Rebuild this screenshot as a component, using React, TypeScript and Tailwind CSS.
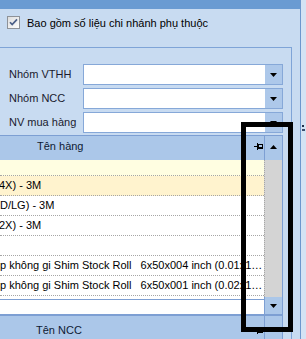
import React from "react";

function DownArrow() {
  return (
    <svg width="7" height="4" viewBox="0 0 7 4" className="block">
      <polygon points="0,0 7,0 3.5,4" fill="#000" />
    </svg>
  );
}

function UpArrow() {
  return (
    <svg width="7" height="4" viewBox="0 0 7 4" className="block">
      <polygon points="0,4 7,4 3.5,0" fill="#000" />
    </svg>
  );
}

function Pin() {
  return (
    <svg width="10" height="7" viewBox="0 0 10 7" className="block" shapeRendering="crispEdges">
      <path d="M0 3.5H3" stroke="#000" strokeWidth="1" />
      <path d="M3.5 0V7" stroke="#000" strokeWidth="1" />
      <rect x="4.5" y="1.5" width="4" height="3" fill="none" stroke="#000" strokeWidth="1" />
      <path d="M4 5.5H9" stroke="#000" strokeWidth="1" />
    </svg>
  );
}

function CheckBox() {
  return (
    <svg width="13" height="13" viewBox="0 0 13 13" className="block shrink-0">
      <defs>
        <linearGradient id="cbg" x1="0" y1="0" x2="1" y2="1">
          <stop offset="0" stopColor="#dcdcdc" />
          <stop offset="1" stopColor="#ffffff" />
        </linearGradient>
      </defs>
      <rect x="0.5" y="0.5" width="12" height="12" fill="url(#cbg)" stroke="#8e9298" />
      <path d="M3 6.2 L5.2 8.6 L10 3.4" fill="none" stroke="#4b5f88" strokeWidth="1.7" />
    </svg>
  );
}

function Combo({ label }: { label: string }) {
  return (
    <div className="flex items-center h-[21px]">
      <div className="w-[83px] pl-[9px] text-[#1a1a2e] leading-[13px]">{label}</div>
      <div className="w-[200px] h-[21px] border border-[#86a8d8] bg-white flex justify-end">
        <div className="w-[17px] h-full bg-[#adc8ea] flex items-center justify-center">
          <DownArrow />
        </div>
      </div>
    </div>
  );
}

function Row({ children, bg = "bg-white", h = "h-[20px]", indent = "pl-0" }: { children?: React.ReactNode; bg?: string; h?: string; indent?: string }) {
  return (
    <div className={`${h} ${bg} border-b border-dotted border-[#a6a6a6] flex items-center overflow-hidden`}>
      <div className={`w-full ${indent} whitespace-pre overflow-hidden text-ellipsis leading-[13px] pr-[1px]`}>{children}</div>
    </div>
  );
}

export default function App() {
  return (
    <div className="w-[306px] h-[339px] overflow-hidden flex bg-[#d4e3f4] font-['Liberation_Sans',Arial,sans-serif] text-[11px] text-black relative">
      <div className="w-[301px] h-full border-r border-[#6d97cd] flex flex-col shrink-0">
        <div className="h-[9px] bg-[#6a9bd2] shrink-0" />
        <div className="flex-1 bg-[#c8dbf1] flex flex-col">
          <div className="h-[38px] pt-[7px] pl-[7px] flex items-start shrink-0">
            <CheckBox />
            <span className="ml-[7px] leading-[13px] mt-[1px]">Bao gồm số liệu chi nhánh phụ thuộc</span>
          </div>
          <div className="w-[292px] flex-1 border-t border-r border-[#7fa4d7] pt-[16px] flex flex-col">
            <div className="flex flex-col gap-[3px]">
              <Combo label="Nhóm VTHH" />
              <Combo label="Nhóm NCC" />
              <Combo label="NV mua hàng" />
            </div>

            <div className="mt-[2px] w-[283px] border-t border-r border-b border-[#7d9fd3] flex shrink-0">
              <div className="w-[264px] flex flex-col">
                <div className="h-[24px] bg-[#abc7e9] flex items-center pb-[3px] pl-[37px] text-[#0e1a33]">
                  <span className="leading-[13px]">Tên hàng</span>
                  <span className="ml-auto mb-[1px]">
                    <Pin />
                  </span>
                </div>
                <Row bg="bg-[#fffee1]" h="h-[16px]" />
                <Row bg="bg-[#fff3ce]" indent="ml-[-1px]">4X) - 3M</Row>
                <Row>D/LG) - 3M</Row>
                <Row indent="ml-[-1px]">2X) - 3M</Row>
                <Row />
                <Row>p không gi Shim Stock Roll   6x50x004 inch (0.01x1.5x50 inch)</Row>
                <Row>p không gi Shim Stock Roll   6x50x001 inch (0.02x1.5x50 inch)</Row>
                <div className="h-[3px] bg-white" />
                <div className="h-[15px] bg-white border-t border-[#7d9fd3]" />
              </div>
              <div className="w-[18px] flex flex-col">
                <div className="h-[24px] bg-[#abc7e9] border-l border-[#7d9fd3] flex items-center justify-center pb-[3px]">
                  <UpArrow />
                </div>
                <div className="flex-1 bg-[#d4d4d4] border-l border-dotted border-[#a6a6a6]" />
                <div className="h-[17px] bg-[#abc7e9] border-l border-[#7d9fd3] flex items-center justify-center">
                  <DownArrow />
                </div>
              </div>
            </div>

            <div className="w-[283px] border-t border-r border-[#7d9fd3] flex shrink-0">
              <div className="w-[264px] h-[28px] bg-[#abc7e9] flex items-center pl-[36px] text-[#0e1a33]">
                <span className="leading-[13px]">Tên NCC</span>
                <span className="ml-auto">
                  <Pin />
                </span>
              </div>
              <div className="w-[18px] h-[28px] bg-[#abc7e9] border-l border-[#7d9fd3]" />
            </div>
          </div>
        </div>
      </div>
      <div className="flex-1 flex flex-col pt-[125px] pl-[1px]">
        <div className="w-[2px] h-[2px] bg-[#1f2f4a]" />
        <div className="w-[3px] h-[2px] bg-[#3a4d6e] mt-[2px]" />
      </div>
      <div className="absolute left-[241px] top-[122px] w-[52px] h-[210px] border-[5px] border-black" />
    </div>
  );
}
